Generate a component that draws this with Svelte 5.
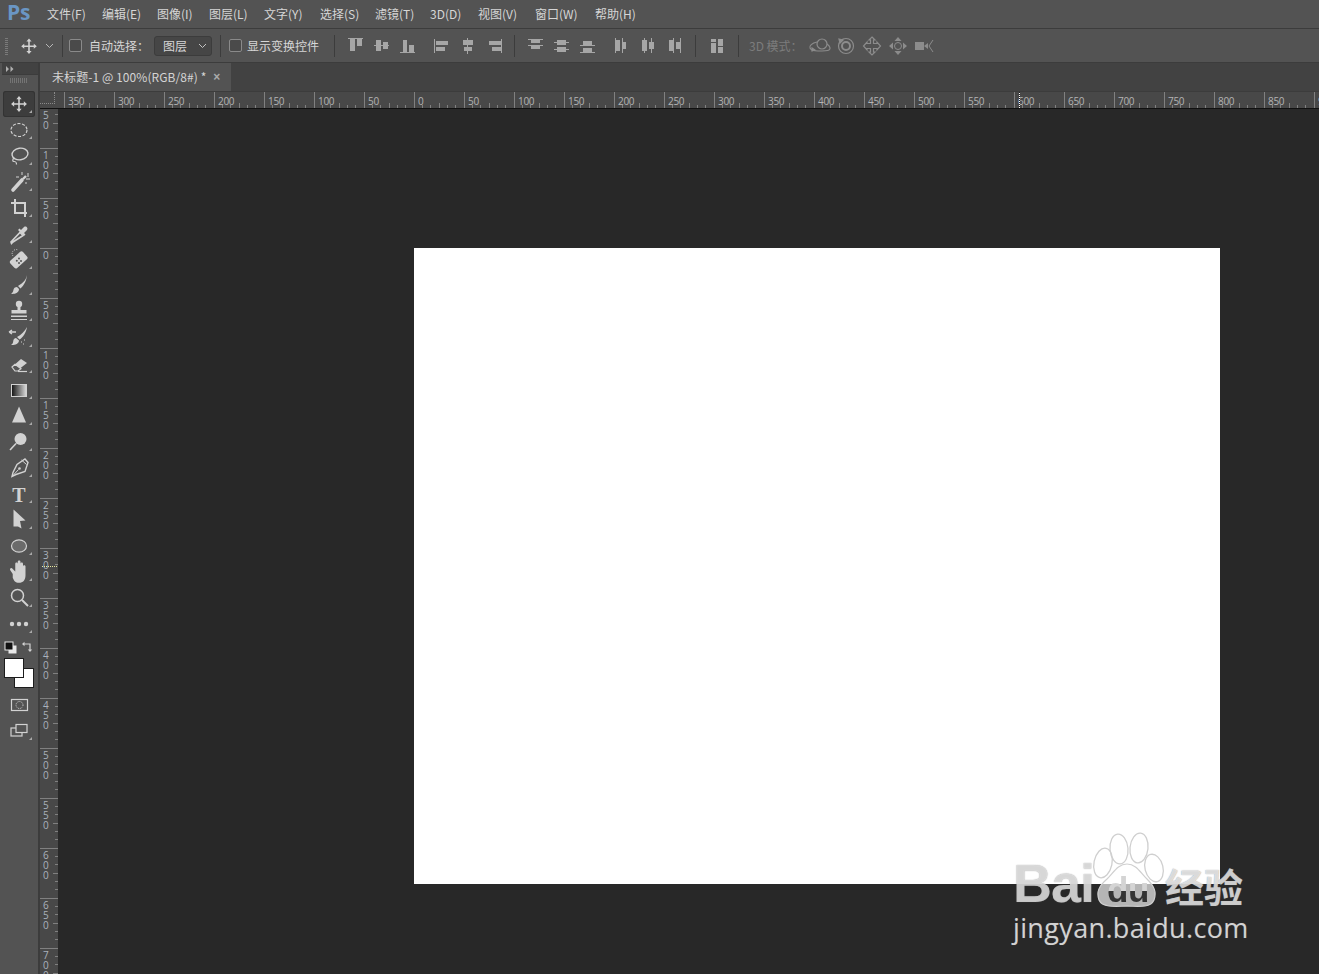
<script>
  const menus = [['文件(F)',55],['编辑(E)',55],['图像(I)',52],['图层(L)',55],['文字(Y)',56],['选择(S)',55],['滤镜(T)',55],['3D(D)',48],['视图(V)',57],['窗口(W)',60],['帮助(H)',50]];

  const c = '#d2d2d2';
  const tools = [
    `<g transform="translate(16 13) scale(.88) translate(-16 -13)"><path d="M16 7v12M10 13h12" stroke="${c}" stroke-width="1.8"/><path d="M16 4l3 3.5h-6zM16 22l-3-3.5h6zM7 13l3.5-3v6zM25 13l-3.5 3v-6z" fill="${c}"/></g>`,
    `<ellipse cx="16" cy="13" rx="8" ry="6.5" fill="none" stroke="${c}" stroke-width="1.2" stroke-dasharray="3 1.6"/>`,
    `<ellipse cx="17" cy="11" rx="8" ry="5.800" fill="none" stroke="${c}" stroke-width="1.4" transform="rotate(-8 17 11)"/><path d="M11.500 15c-2.500 1-2 3.500-.5 3.500s2.500 0 2.500 3" fill="none" stroke="${c}" stroke-width="1.2"/>`,
    `<path d="M10 21l9-10" stroke="${c}" stroke-width="3.6" stroke-linecap="round"/><path d="M20 10l3-3" stroke="${c}" stroke-width="2.400"/><path d="M19 3v3M25 4v4M27 10h-4M13 8h3M23 13v2" stroke="${c}" stroke-width="1"/>`,
    `<path d="M12 4v14h12M8 8h14v14" fill="none" stroke="${c}" stroke-width="2"/>`,
    `<path d="M10 21l-1.5 1.5L8 21l9-9.5 3 3z" fill="none" stroke="${c}" stroke-width="1.6"/><path d="M15 9l6 6 1.5-1.5-1.5-1.5 3-3c1.5-2-1-4.500-3-3l-3 3-1.500-1.500z" fill="${c}"/>`,
    `<rect x="8" y="8" width="17" height="10" rx="2" fill="${c}" transform="rotate(-42 16 14)"/><g fill="#555"><circle cx="16" cy="11.500" r="1"/><circle cx="13.800" cy="13.800" r="1"/><circle cx="18" cy="14" r="1"/><circle cx="16" cy="16" r="1"/></g><path d="M10 9a4 4 0 0 1 5-6" fill="none" stroke="${c}" stroke-dasharray="1 1.200"/>`,
    `<path d="M24 2c-1 5-4 8-9 11l2.500 2.500c3.500-3 6-8 6.500-13.500z" fill="${c}"/><path d="M14 14c-3.500 0-3.500 3-4 4.500-.3 1-1.200 1.800-2 2.300 3.500 .7 8-1 8-4.800z" fill="${c}"/>`,
    `<circle cx="16" cy="5" r="3.200" fill="${c}"/><path d="M14.500 7h3v4h6v3.500h-15V11h6z" fill="${c}"/><path d="M8 16.500h16v1.500H8zM8 20h16v1H8z" fill="${c}"/>`,
    `<path d="M24 2c-2 4-6 8-10 10l2.500 2.500c3.500-2 6.500-6.500 7.500-12.500z" fill="${c}"/><path d="M13 13c-3 .5-2.500 3-3 4.500-.3 1-1.200 2-2 2.500 3.500 .3 8-1 8-4.500z" fill="${c}"/><path d="M6 7h7M6 7l3-2M6 7l3 2" stroke="${c}" stroke-width="1.400" fill="none"/><path d="M18 17h1M21 15h1M20 19h1" stroke="${c}"/>`,
    `<path d="M9 16l9-8 6 4-9 7z" fill="${c}"/><path d="M9 16l3-2.700 6 4.500-3 2.200H12z" fill="#555" stroke="${c}" stroke-width="1.200"/><path d="M15 20.500h9" stroke="${c}" stroke-width="1.200"/>`,
    `<rect x="8.500" y="7.500" width="15" height="12" fill="url(#tg)" stroke="${c}"/>`,
    `<path d="M16 3.500l7 16h-14z" fill="${c}"/>`,
    `<circle cx="17.500" cy="10" r="6" fill="${c}"/><path d="M13 14.500l-6 6.500" stroke="${c}" stroke-width="1.600"/>`,
    `<path d="M22 4l3 3.500-3 9-9 3-4 2 1-4 4-8z" fill="none" stroke="${c}" stroke-width="1.400"/><path d="M18.500 5l5 4.500M10.500 20l5-5.500" stroke="${c}" stroke-width="1"/><circle cx="16.500" cy="13.500" r="1.300" fill="${c}"/>`,
    `<text x="16" y="21" text-anchor="middle" font-family="Liberation Serif, serif" font-size="20" font-weight="700" fill="${c}">T</text>`,
    `<path d="M10.500 2.500l12 11-5.500 .5 1.500 7.500-3.500-2-4.500 0z" fill="${c}"/>`,
    `<ellipse cx="16" cy="13" rx="7.500" ry="6.200" fill="#6b6b6b" stroke="${c}" stroke-width="1.200"/>`,
    `<g transform="translate(16 13) scale(1.25) translate(-15 -12.500)"><path d="M10 14l-2-3c-.8-1.500 1-2.500 2-1l2 2V6c0-1.500 2-1.500 2 0V4.500c0-1.500 2.200-1.500 2.200 0V6c0-1.500 2-1.500 2 0v2c0-1.300 2-1.300 2 0v7c0 4-2 6-5.200 6-3 0-4-1.500-5-4z" fill="${c}"/></g>`,
    `<circle cx="14.500" cy="10.500" r="6" fill="none" stroke="${c}" stroke-width="1.500"/><path d="M19 15l6 6" stroke="${c}" stroke-width="2"/>`,
    `<circle cx="9" cy="13" r="2.200" fill="${c}"/><circle cx="16" cy="13" r="2.200" fill="${c}"/><circle cx="23" cy="13" r="2.200" fill="${c}"/>`
  ];

  const g = '#a6a6a6';
  const align1 = [
    [[0,0,15,1],[2,1,5,12],[9,1,5,7]],
    [[0,7,15,1],[2,2,5,11],[9,4,5,7]],
    [[0,14,15,1],[3,2,4,12],[9,7,5,7]],
    [[0,1,1,14],[2,3,12,4],[2,9,9,4]],
    [[7,0,1,16],[3,2,10,5],[4,9,8,4]],
    [[15,1,1,14],[3,3,12,4],[6,9,9,4]]
  ];
  const align2 = [
    [[0,1,15,1],[3,2,9,3],[0,7,15,1],[3,8,9,3]],
    [[0,4,15,1],[3,2,9,5],[0,11,15,1],[3,9,9,5]],
    [[0,7,15,1],[3,3,9,4],[0,14,15,1],[3,10,9,4]],
    [[1,0,1,15],[2,2,4,11],[8,0,1,15],[9,4,3,7]],
    [[4,0,1,15],[2,2,5,11],[11,0,1,15],[9,4,5,7]],
    [[7,0,1,15],[3,2,4,11],[14,0,1,15],[10,4,4,7]]
  ];
  const autoAlign = [[2,1,5,3],[2,5,5,10],[9,1,5,7],[9,9,5,6]];

  const hLabels = [350,300,250,200,150,100,50,0,50,100,150,200,250,300,350,400,450,500,550,600,650,700,750,800,850,900];
  const vLabels = [150,100,50,0,50,100,150,200,250,300,350,400,450,500,550,600,650,700];
  const ticks = [3,3,5,3,3];
</script>

<div class="app">
  <header class="menubar">
    <span class="logo">Ps</span>
    <nav class="menus">
      {#each menus as [m, w]}<span class="menu" style="width:{w}px">{m}</span>{/each}
    </nav>
  </header>

  <div class="options">
    <span class="grip"></span>
    <svg class="opt-move" width="26" height="22" viewBox="1 0 30 25.400">
      <path d="M16 7v12M10 13h12" stroke="#d2d2d2" stroke-width="1.800"/>
      <path d="M16 4l3 3.500h-6zM16 22l-3-3.500h6zM7 13l3.500-3v6zM25 13l-3.500 3v-6z" fill="#d2d2d2"/>
    </svg>
    <svg class="chev" width="9" height="6" viewBox="0 0 9 6"><path d="M1 1l3.500 3.500L8 1" fill="none" stroke="#b8b8b8"/></svg>
    <span class="sep s1"></span>
    <span class="check"></span>
    <span class="opt-label l1">自动选择：</span>
    <span class="select">图层<svg width="9" height="6" viewBox="0 0 9 6"><path d="M1 1l3.500 3.500L8 1" fill="none" stroke="#c4c4c4"/></svg></span>
    <span class="sep s2"></span>
    <span class="check c2"></span>
    <span class="opt-label l2">显示变换控件</span>
    <span class="sep s3"></span>
    <div class="icons first">
      {#each align1 as rs, i}
        <svg class="ai" class:gapl={i === 3} width="26" height="16" viewBox="-5 0 26 16">
          {#each rs as r}<rect x={r[0]} y={r[1]} width={r[2]} height={r[3]} fill={g}/>{/each}
        </svg>
      {/each}
    </div>
    <span class="sep s4"></span>
    <div class="icons">
      {#each align2 as rs, i}
        <svg class="ai" class:gapl={i === 3} width="26" height="16" viewBox="-5 0 26 16">
          {#each rs as r}<rect x={r[0]} y={r[1]} width={r[2]} height={r[3]} fill={g}/>{/each}
        </svg>
      {/each}
    </div>
    <span class="sep s5"></span>
    <svg class="ai auto" width="26" height="16" viewBox="-5 0 26 16">
      {#each autoAlign as r}<rect x={r[0]} y={r[1]} width={r[2]} height={r[3]} fill={g}/>{/each}
    </svg>
    <span class="sep s6"></span>
    <span class="mode3d">3D 模式：</span>
    <div class="icons3d">
      <svg width="26" height="20" viewBox="0 0 26 20" fill="none" stroke="#8c8c8c" stroke-width="1.200">
        <circle cx="15" cy="8" r="5"/><path d="M10 6c-5 1-8 4-7 6s4 3 8 3 9 0 11-1 1-4-2-6"/><path d="M5 12l3 2-3 1z" fill="#8c8c8c"/>
      </svg>
      <svg width="26" height="20" viewBox="0 0 26 20" fill="none" stroke="#8c8c8c" stroke-width="1.200">
        <circle cx="13" cy="10" r="7.500"/><circle cx="13" cy="10" r="4" stroke-width="2"/><path d="M6 3l4 1-3 3z" fill="#8c8c8c"/>
      </svg>
      <svg width="26" height="20" viewBox="0 0 26 20" fill="none" stroke="#8c8c8c" stroke-width="1.200">
        <path d="M13 1l3 3h-1.500v3.500H18V6l3.500 4-3.500 4v-1.500h-3.500V16H16l-3 3-3-3h1.500v-3.500H8V14l-3.500-4L8 6v1.500h3.500V4H10z"/>
      </svg>
      <svg width="26" height="20" viewBox="0 0 26 20" fill="#8c8c8c">
        <path d="M13 1l3.500 4h-7zM13 19l-3.500-4h7zM4 10l4-3.500v7zM22 10l-4 3.500v-7z"/>
        <circle cx="13" cy="10" r="3.500" fill="none" stroke="#8c8c8c"/>
      </svg>
      <svg width="26" height="20" viewBox="0 0 26 20" fill="#8c8c8c">
        <rect x="4" y="6" width="9" height="8"/><path d="M13 10l4-3v6z"/>
        <path d="M22 4l-4 6 4 6" fill="none" stroke="#8c8c8c"/>
      </svg>
    </div>
  </div>

  <div class="main">
    <aside class="toolbar">
      <div class="collapse">
        <svg width="8" height="6" viewBox="0 0 8 6" fill="#b0b0b0"><path d="M0 0l3 3-3 3zM4.500 0l3 3-3 3z"/></svg>
      </div>
      <div class="dots"></div>
      <svg width="0" height="0" class="defs">
        <defs><linearGradient id="tg"><stop offset="0" stop-color="#111"/><stop offset="1" stop-color="#ddd"/></linearGradient></defs>
      </svg>
      <div class="tools">
        {#each tools as t, i}
          <div class="tool" class:active={i === 0}>
            <svg width="32" height="26" viewBox="0 0 32 26">
              {@html t}
              <path d="M29 19v3h-3z" fill="#a9a9a9"/>
            </svg>
          </div>
        {/each}
      </div>
      <div class="colorctl">
        <div class="mini">
          <svg width="13" height="13" viewBox="0 0 13 13">
            <rect x="4.500" y="4.500" width="8" height="8" fill="#e8e8e8"/>
            <rect x="1" y="1" width="8" height="8" fill="#111" stroke="#e8e8e8"/>
          </svg>
          <svg width="13" height="13" viewBox="0 0 13 13" fill="none" stroke="#d2d2d2" stroke-width="1.200">
            <path d="M2 3h7v6"/><path d="M3.500 .8L1 3l2.500 2.200zM6.800 8.500L9 11l2.200-2.500z" fill="#d2d2d2" stroke="none"/>
          </svg>
        </div>
        <div class="swatches"><span class="sw bg"></span><span class="sw fg"></span></div>
      </div>
      <div class="tool plain">
        <svg width="32" height="26" viewBox="0 0 32 26">
          <rect x="8.500" y="7.500" width="16" height="11" fill="none" stroke="#d2d2d2" stroke-width="1.200"/>
          <circle cx="16.500" cy="13" r="3.500" fill="none" stroke="#d2d2d2" stroke-dasharray="1 1"/>
        </svg>
      </div>
      <div class="tool plain">
        <svg width="32" height="26" viewBox="0 0 32 26">
          <rect x="8" y="10" width="11" height="8" fill="none" stroke="#d2d2d2" stroke-width="1.200"/>
          <rect x="13" y="6.500" width="11" height="8" fill="#535353" stroke="#d2d2d2" stroke-width="1.200"/>
          <path d="M29 19v3h-3z" fill="#a9a9a9"/>
        </svg>
      </div>
    </aside>

    <section class="doc">
      <div class="tabs">
        <div class="tab">未标题-1 @ 100%(RGB/8#) *<span class="close">×</span></div>
      </div>
      <div class="hruler">
        <div class="corner"></div>
        <div class="hscale">
          {#each hLabels as n}
            <div class="hcell">
              <span class="hnum">{n}</span>
              {#each ticks as h}<span class="ht"><i style="height:{h}px"></i></span>{/each}
              <span class="ht"></span>
            </div>
          {/each}
          <span class="hmark"></span>
        </div>
      </div>
      <div class="body">
        <div class="vruler">
          <div class="vscale">
            {#each vLabels as n}
              <div class="vcell">
                <span class="vnum">{#each String(n).split('') as d}<b>{d}</b>{/each}</span>
                {#each ticks as h}<span class="vt"><i style="width:{h}px"></i></span>{/each}
                <span class="vt"></span>
              </div>
            {/each}
          </div>
          <span class="vmark"></span>
        </div>
        <div class="workspace"><div class="canvas"></div></div>
      </div>
    </section>
  </div>

  <div class="mark">
    <svg class="paw" width="80" height="80" viewBox="0 0 80 80">
      <g fill="rgba(255,255,255,.1)" stroke="#cfcfcf" stroke-width="1.300">
        <ellipse cx="12" cy="31" rx="9" ry="15" transform="rotate(12 12 31)"/>
        <ellipse cx="28" cy="17" rx="9" ry="15" transform="rotate(-5 28 17)"/>
        <ellipse cx="48" cy="16" rx="9" ry="15" transform="rotate(6 48 16)"/>
        <ellipse cx="63" cy="36" rx="9" ry="14" transform="rotate(-14 63 36)"/>
      </g>
      <path d="M36 32c9 0 13 8 20 15 7 7 10 13 7 21-3 7-12 7-27 6-14 1-25 1-28-6-3-8 0-14 8-21 7-7 11-15 20-15z" fill="rgba(255,255,255,.66)" stroke="#cfcfcf" stroke-width="1.200"/>
    </svg>
    <div class="brand">
      <span class="bai">Bai</span><span class="du">du</span><span class="jy">经验</span>
    </div>
    <div class="url">jingyan.baidu.com</div>
  </div>
</div>

<style>
  :global(body) { margin: 0; background: #282828; overflow: hidden; }
  .app {
    width: 1319px; height: 974px; position: relative; overflow: hidden;
    display: flex; flex-direction: column; background: #282828;
    font-family: "Noto Sans CJK SC", "Open Sans", sans-serif; font-size: 12px; color: #d6d6d6;
  }
  .menubar {
    height: 28px; flex: none; background: #535353; border-bottom: 1px solid #3c3c3c;
    display: flex; align-items: center;
  }
  .logo {
    width: 47px; padding: 0 0 4px 7px; box-sizing: border-box;
    font: 700 21px "Open Sans", sans-serif; color: #6a96c4; letter-spacing: -.3px; line-height: 24px;
  }
  .menus { display: flex; }
  .menu { white-space: nowrap; line-height: 28px; }

  .options {
    height: 33px; flex: none; background: #535353; border-bottom: 1px solid #3c3c3c;
    display: flex; align-items: center; box-sizing: content-box;
  }
  .grip {
    width: 3px; height: 18px; margin-left: 5px;
    background: repeating-linear-gradient(0deg, #7a7a7a 0 1px, transparent 1px 2px);
  }
  .opt-move { margin-left: 8px; }
  .chev { margin-left: 3px; }
  .sep { width: 1px; height: 22px; background: #3c3c3c; flex: none; }
  .s1 { margin-left: 8px; }
  .check {
    width: 11px; height: 11px; border: 1px solid #8a8a8a; border-radius: 2px; background: #4a4a4a; margin-left: 6px; flex: none;
  }
  .opt-label { white-space: nowrap; }
  .l1 { margin-left: 7px; width: 65px; }
  .select {
    width: 58px; height: 20px; box-sizing: border-box; background: #464646; border: 1px solid #3c3c3c; border-radius: 3px;
    display: flex; align-items: center; justify-content: space-between; padding: 0 4px 0 8px; line-height: 18px;
  }
  .s2 { margin-left: 8px; }
  .c2 { margin-left: 8px; }
  .l2 { margin-left: 5px; width: 87px; }
  .icons { display: flex; align-items: center; margin-left: 8px; }
  .icons.first { margin-left: 8px; }
  .ai { flex: none; display: block; }
  .gapl { margin-left: 8px; }
  .s4 { margin-left: 7px; }
  .s5 { margin-left: 8px; }
  .auto { margin-left: 8px; }
  .s6 { margin-left: 8px; }
  .mode3d { margin-left: 10px; width: 58px; color: #7c7c7c; white-space: nowrap; }
  .icons3d { display: flex; align-items: center; }

  .main { flex: 1; display: flex; min-height: 0; }
  .toolbar {
    width: 38px; flex: none; background: #535353; border-right: 2px solid #3c3c3c;
    box-sizing: content-box; display: flex; flex-direction: column; align-items: flex-start;
  }
  .collapse {
    width: 36px; height: 12px; margin-left: 2px; background: #424242; display: flex; align-items: center; padding-left: 4px;
    box-sizing: border-box; border-bottom: 1px solid #3c3c3c;
  }
  .dots {
    width: 18px; height: 5px; margin: 3px 0 0 10px;
    background: repeating-linear-gradient(90deg, #747474 0 1px, transparent 1px 2px);
  }
  .defs { position: absolute; }
  .tools { margin: 8px 0 0 3px; }
  .tool { width: 32px; height: 26px; box-sizing: border-box; }
  .tool svg { display: block; }
  .tool.active { background: #3d3d3d; border-radius: 3px; box-shadow: inset 0 0 0 1px #333; }
  .plain { margin-left: 3px; }
  .colorctl { margin: 4px 0 0 4px; }
  .mini { display: flex; justify-content: space-between; width: 30px; }
  .swatches { width: 30px; height: 30px; position: relative; margin: 4px 0 4px 0; }
  .sw { position: absolute; width: 18px; height: 18px; background: #fff; border: 1px solid #1c1c1c; box-sizing: content-box; }
  .fg { left: 0; top: 0; }
  .bg { left: 10px; top: 10px; }

  .doc { flex: 1; min-width: 0; display: flex; flex-direction: column; }
  .tabs { height: 28px; flex: none; background: #424242; border-bottom: 1px solid #3c3c3c; display: flex; }
  .tab {
    width: 191px; box-sizing: border-box; background: #535353; padding-left: 12px; line-height: 28px;
    white-space: nowrap; display: flex; color: #d4d4d4; letter-spacing: .07px;
  }
  .close { margin-left: 7px; font: 700 12px "Liberation Sans", sans-serif; line-height: 28px; color: #aaa; }
  .hruler { height: 16px; flex: none; display: flex; background: #484848; border-bottom: 1px solid #111; }
  .corner {
    width: 14px; height: 11px; flex: none; margin-right: 4px; box-sizing: content-box;
    border-right: 1px dotted #8a8a8a; border-bottom: 1px dotted #8a8a8a;
  }
  .hscale { position: relative; display: flex; margin-left: 5px; flex: 1; overflow: hidden; }
  .hcell {
    position: relative; width: 50px; flex: none; display: flex; align-items: flex-end; box-sizing: border-box;
    border-left: 1px solid #808080;
  }
  .hnum { position: absolute; left: 3px; top: 1px; font: 10px/16px "Open Sans", sans-serif; letter-spacing: -.3px; color: #b4b4b4; z-index: 1; padding-right: 1px; }
  .ht { flex: 1; display: block; height: 100%; position: relative; }
  .ht i { position: absolute; right: 0; bottom: 0; width: 1px; background: #808080; display: block; }
  .hmark {
    position: absolute; left: 955px; top: 0; bottom: 0; width: 1px; z-index: 2;
    background: repeating-linear-gradient(0deg, #fff 0 1px, #222 1px 2px);
  }
  .body { flex: 1; display: flex; min-height: 0; }
  .vruler { width: 18px; flex: none; background: #484848; position: relative; overflow: hidden; }
  .vscale { margin-top: -11px; display: flex; flex-direction: column; }
  .vcell {
    position: relative; height: 50px; flex: none; display: flex; flex-direction: column; align-items: flex-end;
    box-sizing: border-box; border-top: 1px solid #808080;
  }
  .vnum { position: absolute; left: 3px; top: 1px; display: flex; flex-direction: column; font: 10px/10px "Open Sans", sans-serif; color: #aab2bc; }
  .vnum b { font-weight: 400; }
  .vt { flex: 1; width: 100%; position: relative; display: block; }
  .vt i { position: absolute; right: 0; bottom: 0; height: 1px; background: #808080; display: block; }
  .vmark {
    position: absolute; left: 2px; right: 0; top: 457px; height: 1px;
    background: repeating-linear-gradient(90deg, #e6e6a0 0 1px, transparent 1px 2px);
  }
  .workspace { flex: 1; padding: 139px 0 0 356px; background: #282828; }
  .canvas { width: 806px; height: 636px; background: #fff; }

  .mark { position: absolute; left: 1013px; top: 832px; width: 240px; height: 120px; pointer-events: none; }
  .paw { position: absolute; left: 78px; top: 0; }
  .brand { position: absolute; left: 0; top: 19px; display: flex; align-items: baseline; white-space: nowrap; }
  .bai {
    width: 94px; font: 700 54px/64px "Liberation Sans", sans-serif; letter-spacing: -1px; color: rgba(255,255,255,.66);
    text-shadow: 0 0 1px rgba(110,110,110,.8);
  }
  .du {
    width: 45px; font: 700 35px/64px "Liberation Sans", sans-serif; letter-spacing: -.5px; color: transparent;
    background: linear-gradient(#d4d4d4 0 33px, #333 33px);
    -webkit-background-clip: text; background-clip: text;
  }
  .jy {
    font: 700 39px/64px "Noto Sans CJK SC", sans-serif; color: rgba(255,255,255,.7); margin-left: 13px;
    text-shadow: 0 0 1px rgba(110,110,110,.8);
  }
  .url {
    position: absolute; left: 0; top: 78px; font: 27px/36px "Open Sans", sans-serif; letter-spacing: .35px; color: rgba(255,255,255,.76);
    white-space: nowrap; text-shadow: 0 0 1px rgba(110,110,110,.6);
  }
</style>
